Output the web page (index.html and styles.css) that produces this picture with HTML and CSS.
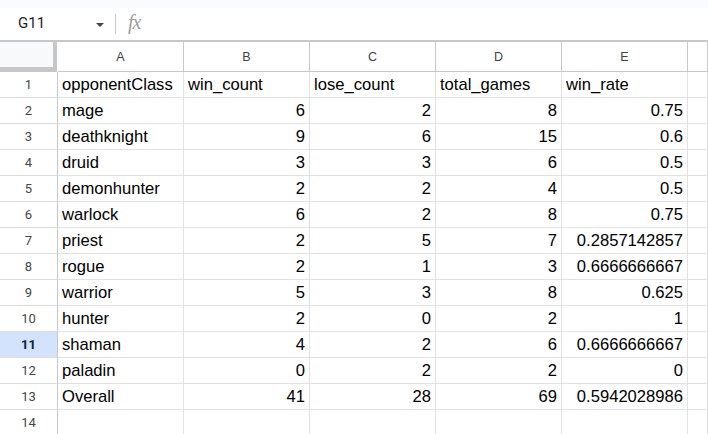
FILE: index.html
```html
<!DOCTYPE html>
<html>
<head>
<meta charset="utf-8">
<link rel="stylesheet" href="styles.css">
</head>
<body>
<div class="topstrip"></div>
<div class="fbar">
  <div class="namebox"><span class="ref">G11</span><span class="caret"></span></div>
  <div class="divider"></div>
  <div class="fx">fx</div>
</div>
<div class="sheet">
  <div class="corner"></div>
  <div class="ch">A</div><div class="ch">B</div><div class="ch">C</div><div class="ch">D</div><div class="ch">E</div><div class="ch"></div>

  <div class="rh">1</div><div class="c">opponentClass</div><div class="c">win_count</div><div class="c">lose_count</div><div class="c">total_games</div><div class="c">win_rate</div><div class="c"></div>
  <div class="rh">2</div><div class="c">mage</div><div class="c n">6</div><div class="c n">2</div><div class="c n">8</div><div class="c n">0.75</div><div class="c"></div>
  <div class="rh">3</div><div class="c">deathknight</div><div class="c n">9</div><div class="c n">6</div><div class="c n">15</div><div class="c n">0.6</div><div class="c"></div>
  <div class="rh">4</div><div class="c">druid</div><div class="c n">3</div><div class="c n">3</div><div class="c n">6</div><div class="c n">0.5</div><div class="c"></div>
  <div class="rh">5</div><div class="c">demonhunter</div><div class="c n">2</div><div class="c n">2</div><div class="c n">4</div><div class="c n">0.5</div><div class="c"></div>
  <div class="rh">6</div><div class="c">warlock</div><div class="c n">6</div><div class="c n">2</div><div class="c n">8</div><div class="c n">0.75</div><div class="c"></div>
  <div class="rh">7</div><div class="c">priest</div><div class="c n">2</div><div class="c n">5</div><div class="c n">7</div><div class="c n">0.2857142857</div><div class="c"></div>
  <div class="rh">8</div><div class="c">rogue</div><div class="c n">2</div><div class="c n">1</div><div class="c n">3</div><div class="c n">0.6666666667</div><div class="c"></div>
  <div class="rh">9</div><div class="c">warrior</div><div class="c n">5</div><div class="c n">3</div><div class="c n">8</div><div class="c n">0.625</div><div class="c"></div>
  <div class="rh">10</div><div class="c">hunter</div><div class="c n">2</div><div class="c n">0</div><div class="c n">2</div><div class="c n">1</div><div class="c"></div>
  <div class="rh sel">11</div><div class="c">shaman</div><div class="c n">4</div><div class="c n">2</div><div class="c n">6</div><div class="c n">0.6666666667</div><div class="c"></div>
  <div class="rh">12</div><div class="c">paladin</div><div class="c n">0</div><div class="c n">2</div><div class="c n">2</div><div class="c n">0</div><div class="c"></div>
  <div class="rh">13</div><div class="c">Overall</div><div class="c n">41</div><div class="c n">28</div><div class="c n">69</div><div class="c n">0.5942028986</div><div class="c"></div>
  <div class="rh">14</div><div class="c"></div><div class="c"></div><div class="c"></div><div class="c"></div><div class="c"></div><div class="c"></div>
</div>
</body>
</html>
```
FILE: styles.css
```css
html, body {
  margin: 0;
  padding: 0;
  background: #ffffff;
  overflow: hidden;
  width: 708px;
  height: 434px;
}
.topstrip {
  height: 8px;
  background: #f9fbfd;
}
.fbar {
  height: 32px;
  display: flex;
  align-items: center;
  background: #ffffff;
  border-bottom: 2px solid #c7c7c7;
}
.namebox {
  width: 115px;
  display: flex;
  align-items: center;
  box-sizing: border-box;
  padding-left: 18px;
  padding-right: 11px;
}
.ref {
  font-family: Roboto, "Liberation Sans", sans-serif;
  font-size: 15px;
  color: #1f1f1f;
  flex: 1;
  position: relative;
  top: -1px;
}
.caret {
  width: 0;
  height: 0;
  border-left: 4px solid transparent;
  border-right: 4px solid transparent;
  border-top: 4px solid #444746;
  margin-top: 2px;
}
.divider {
  width: 1px;
  height: 20px;
  background: #c7c7c7;
}
.fx {
  margin-left: 12px;
  font-family: "Liberation Serif", serif;
  font-style: italic;
  font-size: 20px;
  color: #9e9e9e;
  letter-spacing: -1px;
  position: relative;
  top: -2px;
}
.sheet {
  display: grid;
  grid-template-columns: 58px repeat(5, 126px) 1fr;
  grid-template-rows: 30px;
  grid-auto-rows: 26px;
  font-family: "Liberation Sans", Arial, sans-serif;
}
.corner {
  background: #f8f9fa;
  border-right: 4px solid #c7c7c7;
  border-bottom: 5px solid #c7c7c7;
  box-sizing: border-box;
  margin-right: 1px;
}
.ch {
  display: flex;
  align-items: center;
  justify-content: center;
  font-size: 12.5px;
  color: #3c4043;
  border-right: 1px solid #c7c7c7;
  border-bottom: 1px solid #c7c7c7;
  box-sizing: border-box;
  padding-top: 1px;
}
.rh {
  display: flex;
  align-items: center;
  justify-content: center;
  font-family: Roboto, "Liberation Sans", sans-serif;
  font-size: 13px;
  color: #444746;
  border-right: 1px solid #c7c7c7;
  border-bottom: 1px solid #dcdcdc;
  box-sizing: border-box;
}
.rh.sel {
  background: #d3e3fd;
  font-weight: bold;
  color: #0b1f3f;
}
.c {
  display: flex;
  align-items: flex-end;
  font-size: 16.6px;
  color: #000000;
  padding: 0 4px 2px 4px;
  border-right: 1px solid #e1e1e1;
  border-bottom: 1px solid #e1e1e1;
  box-sizing: border-box;
  white-space: nowrap;
  overflow: hidden;
}
.c.n {
  justify-content: flex-end;
}
```
